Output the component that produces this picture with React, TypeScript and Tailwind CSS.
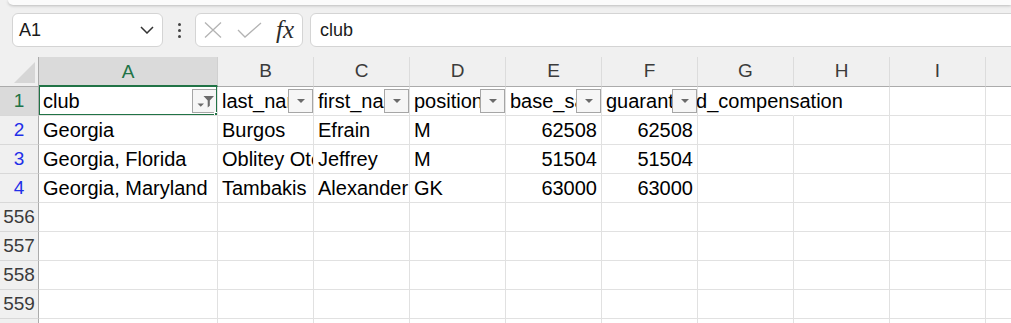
const colWidths = [179, 96, 96, 96, 96, 96, 96, 96, 96, 96]
const letters = ['A', 'B', 'C', 'D', 'E', 'F', 'G', 'H', 'I', 'J']

type Row = {
  label: string
  tone: 'selected' | 'filtered' | 'plain'
  cells: string[]
}

const rows: Row[] = [
  {
    label: '1',
    tone: 'selected',
    cells: ['club', 'last_name', 'first_name', 'position', 'base_salary', 'guaranteed_compensation'],
  },
  { label: '2', tone: 'filtered', cells: ['Georgia', 'Burgos', 'Efrain', 'M', '62508', '62508'] },
  { label: '3', tone: 'filtered', cells: ['Georgia, Florida', 'Oblitey Otoo', 'Jeffrey', 'M', '51504', '51504'] },
  { label: '4', tone: 'filtered', cells: ['Georgia, Maryland', 'Tambakis', 'Alexander', 'GK', '63000', '63000'] },
  { label: '556', tone: 'plain', cells: [] },
  { label: '557', tone: 'plain', cells: [] },
  { label: '558', tone: 'plain', cells: [] },
  { label: '559', tone: 'plain', cells: [] },
  { label: '560', tone: 'plain', cells: [] },
]

function FilterButton({ active }: { active: boolean }) {
  return (
    <div className="absolute right-0 top-[2px] z-20 flex h-[24px] w-[25px] items-center justify-center border border-[#a6a6a6] bg-[#f6f6f6]">
      {active ? (
        <svg width="20" height="20" viewBox="0 0 20 20" aria-hidden="true">
          <path d="M2.5 12.5h6.5l-3.25 3.25z" fill="#6b6b6b" />
          <path d="M8.5 5h10.5l-4.2 4.6v5.2l-2.1 1.6v-6.8z" fill="#6b6b6b" />
        </svg>
      ) : (
        <svg width="12" height="8" viewBox="0 0 12 8" aria-hidden="true">
          <path d="M2 2h8l-4 4z" fill="#6b6b6b" />
        </svg>
      )}
    </div>
  )
}

function FormulaBar() {
  return (
    <div className="mt-[8px] flex h-[34px] items-center pl-[12px]">
      <div className="flex h-full w-[151px] shrink-0 items-center justify-between rounded-[6px] border border-[#d4d4d4] bg-white pl-[6px] pr-[8px]">
        <span className="text-[18px] text-[#1a1a1a]">A1</span>
        <svg width="14" height="8" viewBox="0 0 14 8" aria-hidden="true">
          <path d="M1 1l6 6 6-6" fill="none" stroke="#333" strokeWidth="1.5" />
        </svg>
      </div>
      <div className="flex w-[32px] shrink-0 flex-col items-center gap-[3px]">
        <span className="h-[3px] w-[3px] rounded-full bg-[#444]" />
        <span className="h-[3px] w-[3px] rounded-full bg-[#444]" />
        <span className="h-[3px] w-[3px] rounded-full bg-[#444]" />
      </div>
      <div className="flex h-full w-[108px] shrink-0 items-center rounded-[6px] border border-[#d4d4d4] bg-white pl-[8px]">
        <svg width="18" height="16" viewBox="0 0 18 16" aria-hidden="true">
          <path d="M1 0.5l16 15M17 0.5l-16 15" fill="none" stroke="#b3b3b3" strokeWidth="1.3" />
        </svg>
        <svg className="ml-[15px]" width="25" height="16" viewBox="0 0 25 16" aria-hidden="true">
          <path d="M1 8l7 7L24 1" fill="none" stroke="#b3b3b3" strokeWidth="1.3" />
        </svg>
        <span className="ml-[14px] pb-[2px] font-['Liberation_Serif'] text-[25px] italic leading-none text-[#2b2b2b]">fx</span>
      </div>
      <div className="ml-[7px] flex h-full w-[740px] shrink-0 items-center rounded-l-[6px] border border-[#d4d4d4] bg-white pl-[9px]">
        <span className="text-[18px] text-[#1a1a1a]">club</span>
      </div>
    </div>
  )
}

function HeaderRow() {
  return (
    <div className="flex h-[30px]">
      <div className="flex h-full w-[39px] shrink-0 items-end justify-end border-r border-b border-[#ababab] bg-[#f0f0f0] pb-[3px] pr-[2px]">
        <svg width="22" height="21" viewBox="0 0 22 21" aria-hidden="true">
          <path d="M0 21L21 0v21z" fill="#d6d6d6" />
        </svg>
      </div>
      {colWidths.map((w, i) => (
        <div
          key={letters[i]}
          style={{ width: w }}
          className={
            i === 0
              ? 'flex h-full shrink-0 items-center justify-center border-r border-b-2 border-r-[#d0d0d0] border-b-[#217346] bg-[#dadada] pt-[2px] text-[19px] text-[#217346]'
              : 'flex h-full shrink-0 items-center justify-center border-r border-b border-r-[#dcdcdc] border-b-[#ababab] bg-[#f0f0f0] text-[19px] text-[#3b3b3b]'
          }
        >
          {letters[i]}
        </div>
      ))}
    </div>
  )
}

function DataRow({ row }: { row: Row }) {
  const labelClass =
    row.tone === 'selected'
      ? 'bg-[#dadada] text-[#217346]'
      : row.tone === 'filtered'
        ? 'bg-[#f0f0f0] text-[#1f2fe8]'
        : 'bg-[#f0f0f0] text-[#3b3b3b]'
  const isHeader = row.tone === 'selected'

  return (
    <div className="flex h-[29px]">
      <div
        className={`flex h-full w-[39px] shrink-0 items-center justify-center border-r border-b border-r-[#ababab] border-b-[#d8d8d8] text-[19px] ${labelClass}`}
      >
        {row.label}
      </div>
      {colWidths.map((w, i) => {
        const value = row.cells[i] ?? ''
        const numeric = /^\d+$/.test(value)
        const spills = isHeader && i === 5
        const hideRight = isHeader && i === 6
        return (
          <div
            key={i}
            style={{ width: w }}
            className={`relative flex h-full shrink-0 items-center whitespace-nowrap border-b border-[#e1e1e1] text-[20px] text-black ${
              hideRight ? 'border-r border-r-white' : 'border-r'
            } ${spills ? 'overflow-visible z-10' : 'overflow-hidden'} ${numeric ? 'justify-end pr-[4px]' : 'pl-[4px]'}`}
          >
            <span>{value}</span>
            {isHeader && i < 6 && <FilterButton active={i === 0} />}
            {isHeader && i === 0 && (
              <div className="absolute -left-px -top-[2px] -right-px -bottom-px z-30 border-2 border-[#217346]">
                <span className="absolute -right-[5px] -bottom-[5px] h-[7px] w-[7px] border border-white bg-[#217346]" />
              </div>
            )}
          </div>
        )
      })}
    </div>
  )
}

export default function App() {
  return (
    <div className="h-[323px] w-[1011px] overflow-hidden bg-[#f0f0f0] font-['Liberation_Sans',Arial,sans-serif]">
      <div className="ml-[8px] h-[5px] rounded-bl-[6px] bg-[#fbfbfb] shadow-[0_1px_3px_rgba(0,0,0,0.22)]" />
      <FormulaBar />
      <div className="mt-[10px] w-[1011px] overflow-hidden bg-white">
        <HeaderRow />
        {rows.map((row) => (
          <DataRow key={row.label} row={row} />
        ))}
      </div>
    </div>
  )
}
